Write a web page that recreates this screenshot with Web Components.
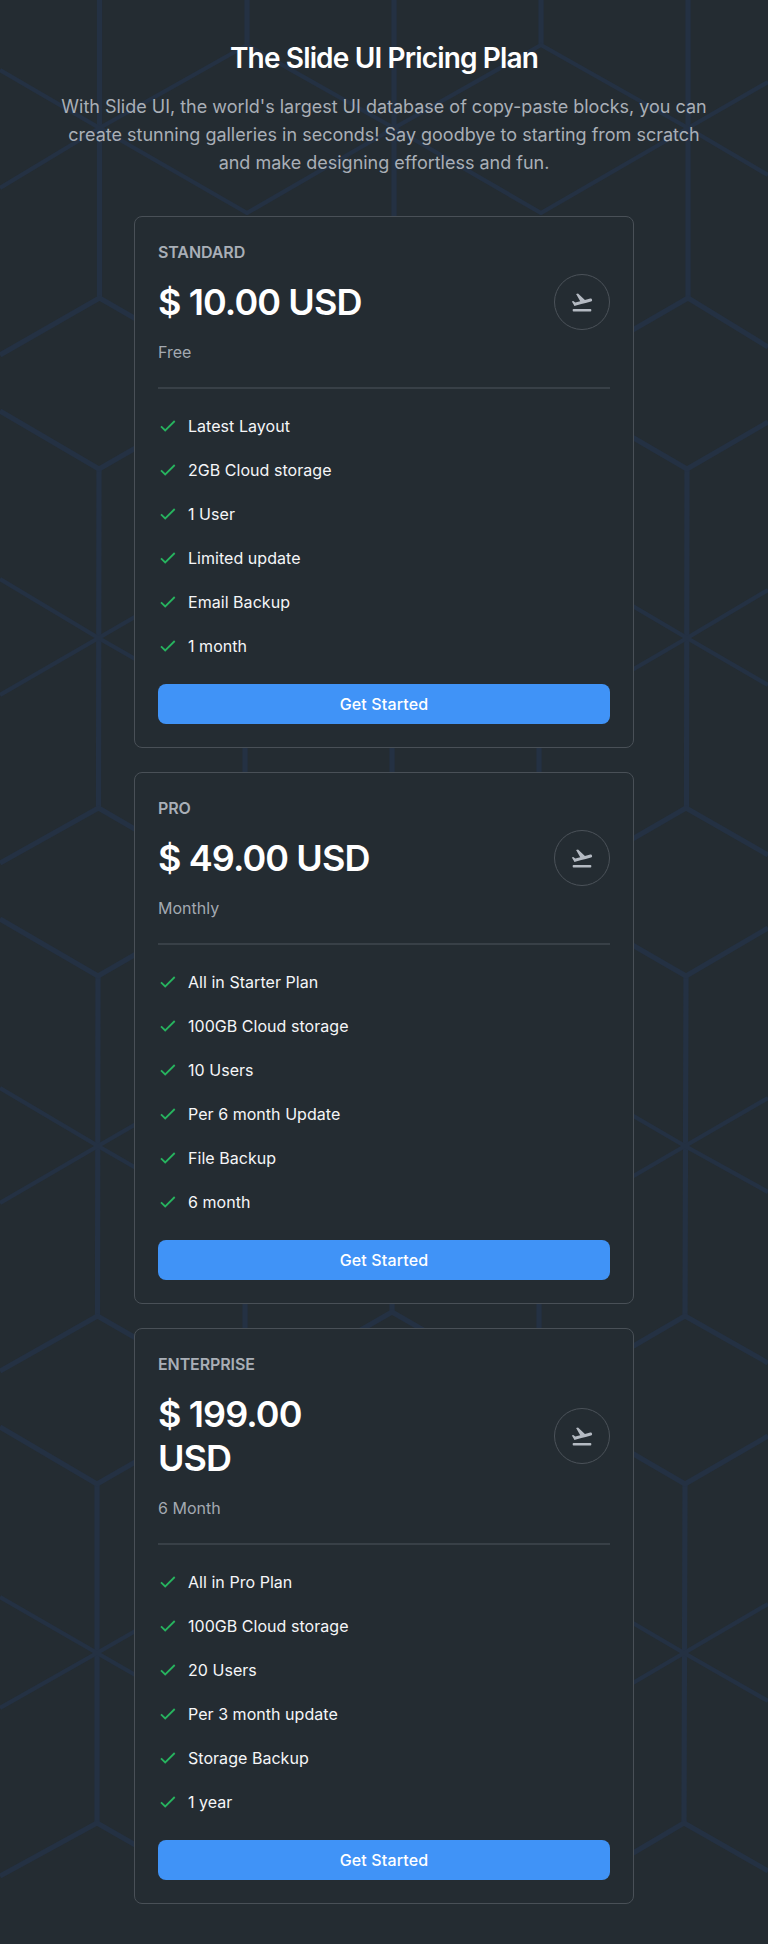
<!DOCTYPE html>
<html lang="en">
<head>
<meta charset="utf-8">
<title>Pricing</title>
<style>
html,body{margin:0;background:#242c32}
body{font-family:Inter,"Liberation Sans",sans-serif;color:#fff}
</style>
</head>
<body>
<pricing-page>
  <span slot="title">The Slide UI Pricing Plan</span>
  <span slot="intro">With Slide UI, the world's largest UI database of copy-paste blocks, you can create stunning galleries in seconds! Say goodbye to starting from scratch and make designing effortless and fun.</span>
  <plan-card name="STANDARD" price="$ 10.00 USD" period="Free">
    <plan-feature>Latest Layout</plan-feature>
    <plan-feature>2GB Cloud storage</plan-feature>
    <plan-feature>1 User</plan-feature>
    <plan-feature>Limited update</plan-feature>
    <plan-feature>Email Backup</plan-feature>
    <plan-feature>1 month</plan-feature>
  </plan-card>
  <plan-card name="PRO" price="$ 49.00 USD" period="Monthly">
    <plan-feature>All in Starter Plan</plan-feature>
    <plan-feature>100GB Cloud storage</plan-feature>
    <plan-feature>10 Users</plan-feature>
    <plan-feature>Per 6 month Update</plan-feature>
    <plan-feature>File Backup</plan-feature>
    <plan-feature>6 month</plan-feature>
  </plan-card>
  <plan-card name="ENTERPRISE" price="$ 199.00 USD" period="6 Month">
    <plan-feature>All in Pro Plan</plan-feature>
    <plan-feature>100GB Cloud storage</plan-feature>
    <plan-feature>20 Users</plan-feature>
    <plan-feature>Per 3 month update</plan-feature>
    <plan-feature>Storage Backup</plan-feature>
    <plan-feature>1 year</plan-feature>
  </plan-card>
</pricing-page>
<script>
const define = (name, html, setup) => customElements.define(name, class extends HTMLElement {
  constructor() {
    super();
    this.attachShadow({ mode: 'open' }).innerHTML = html;
  }
  connectedCallback() { if (setup) setup(this, this.shadowRoot); }
});

define('hex-backdrop', `
<style>:host{display:block;position:absolute;inset:0;overflow:hidden}svg{display:block}</style>
<svg width="768" height="1944" viewBox="0 0 768 1944" fill="none" stroke="#243143" stroke-linejoin="round">
<g stroke-width="5.2">
<path d="M99.500 0V298M394 0V298M688 0V298M247 0V45M541 0V45"/>
<path d="M99 469L98.500 808M687 469L686.500 808M245 720V800M392 720V800M539 720V800"/>
<path d="M98 976L97.500 1316M686 976L685 1316M245 1270V1350M539 1270V1350M392 1270V1312"/>
<path d="M97 1484V1823M685 1484L684 1823"/>
</g>
<g stroke-width="4.300">
<path d="M0 70L99.500 128L247 213L394 128L541 45L688 128L768 175M0 188L99.500 128L247 45L394 128L541 213L688 128L768 82"/>
<path d="M0 579L98.500 638L247 723M541 723L687 638L768 590M0 695L98.500 638L247 552M541 552L687 638L768 685"/>
<path d="M0 1088L98 1146L245 1231M539 1231L685 1146L768 1098M0 1203L98 1146L245 1061M539 1061L685 1146L768 1192"/>
<path d="M0 1597L97 1653L245 1738M539 1738L684 1653L768 1604M0 1708L97 1653L245 1568M539 1568L684 1653L768 1701"/>
</g>
<g stroke-width="5">
<path d="M0 355L99.500 298L247 383M541 383L688 298L768 347M0 411L99 469L247 384M541 384L687 469L768 422"/>
<path d="M0 863L98.500 808L245 893M539 893L686 808L768 855M0 919L98 976L245 891M539 891L686 976L768 928"/>
<path d="M300 1365L392 1312L484 1365"/>
<path d="M0 1371L97.500 1316L245 1401M539 1401L685 1316L768 1363M0 1427L97 1484L245 1399M539 1399L685 1484L768 1436"/>
<path d="M0 1876L97 1823L200 1882M584 1882L684 1823L768 1871"/>
</g>
</svg>`);

define('pricing-page', `
<style>
:host{display:block;position:relative;box-sizing:border-box;height:1944px;background:#242c32;overflow:hidden}
main{position:relative;display:flex;flex-direction:column;align-items:center;padding-top:40px}
h1{margin:0;font-size:28px;line-height:36px;font-weight:600;letter-spacing:-.85px}
p{margin:17px 0 39px;width:660px;text-align:center;font-size:18px;line-height:28px;letter-spacing:-.01px;color:#a9afb7}
.cards{display:flex;flex-direction:column;gap:24px;width:500px}
</style>
<hex-backdrop></hex-backdrop>
<main><h1><slot name="title"></slot></h1><p><slot name="intro"></slot></p><div class="cards"><slot></slot></div></main>`);

define('plane-badge', `
<style>:host{display:flex;box-sizing:border-box;width:56px;height:56px;border:1px solid #4b5259;border-radius:50%;align-items:center;justify-content:center;flex:none}</style>
<svg width="24" height="24" viewBox="0 0 24 24" fill="#b4bac2"><path d="M3.500 19h17a.8.8 0 0 1 .8.8v.9a.8.8 0 0 1-.8.8h-17a.8.8 0 0 1-.8-.8v-.9a.8.8 0 0 1 .8-.8zM22.070 9.640c-.21-.8-1.040-1.280-1.840-1.060L14.920 10l-6.900-6.430-1.930.51 4.140 7.170-4.970 1.330-1.970-1.540-1.450.39 1.820 3.160.77 1.330 1.600-.43 5.310-1.420 4.350-1.160L21 11.490c.81-.23 1.280-1.050 1.070-1.850z"/></svg>`);

define('plan-feature', `
<style>:host{display:flex;align-items:center;gap:10px;height:24px;font-size:16px;line-height:24px;letter-spacing:.04px;color:#f5f6f8}svg{flex:none}</style>
<svg width="20" height="20" viewBox="0 0 20 20" fill="none" stroke="#27b45f" stroke-width="1.800"><path d="M3 10.300L7.200 14.500L16.700 5"/></svg><span><slot></slot></span>`);

define('cta-button', `
<style>:host{display:block}button{display:block;width:100%;height:40px;border:0;border-radius:8px;background:#4093f7;color:#fff;font:500 16px/24px Inter,"Liberation Sans",sans-serif;letter-spacing:.15px;padding:0}</style>
<button><slot></slot></button>`);

define('plan-card', `
<style>
:host{display:block;box-sizing:border-box;border:1px solid #495057;border-radius:8px;background:#242c32;padding:23px}
.name{font-size:16px;line-height:24px;font-weight:600;letter-spacing:-.1px;color:#a9afb7}
.row{display:flex;align-items:center;justify-content:space-between;margin-top:10px}
.price{max-width:216px;font-size:36px;line-height:44px;font-weight:600;letter-spacing:-.9px;padding:6px 0}
.period{margin-top:10px;font-size:16px;line-height:24px;color:#a3a9b1}
hr{margin:23px 0 25px;border:0;height:2px;background:#384047}
.list{display:flex;flex-direction:column;gap:20px;margin-bottom:26px}
</style>
<div class="name"></div>
<div class="row"><div class="price"></div><plane-badge></plane-badge></div>
<div class="period"></div>
<hr>
<div class="list"><slot></slot></div>
<cta-button>Get Started</cta-button>`, (el, root) => {
  for (const key of ['name', 'price', 'period'])
    root.querySelector('.' + key).textContent = el.getAttribute(key);
});
</script>
</body>
</html>
